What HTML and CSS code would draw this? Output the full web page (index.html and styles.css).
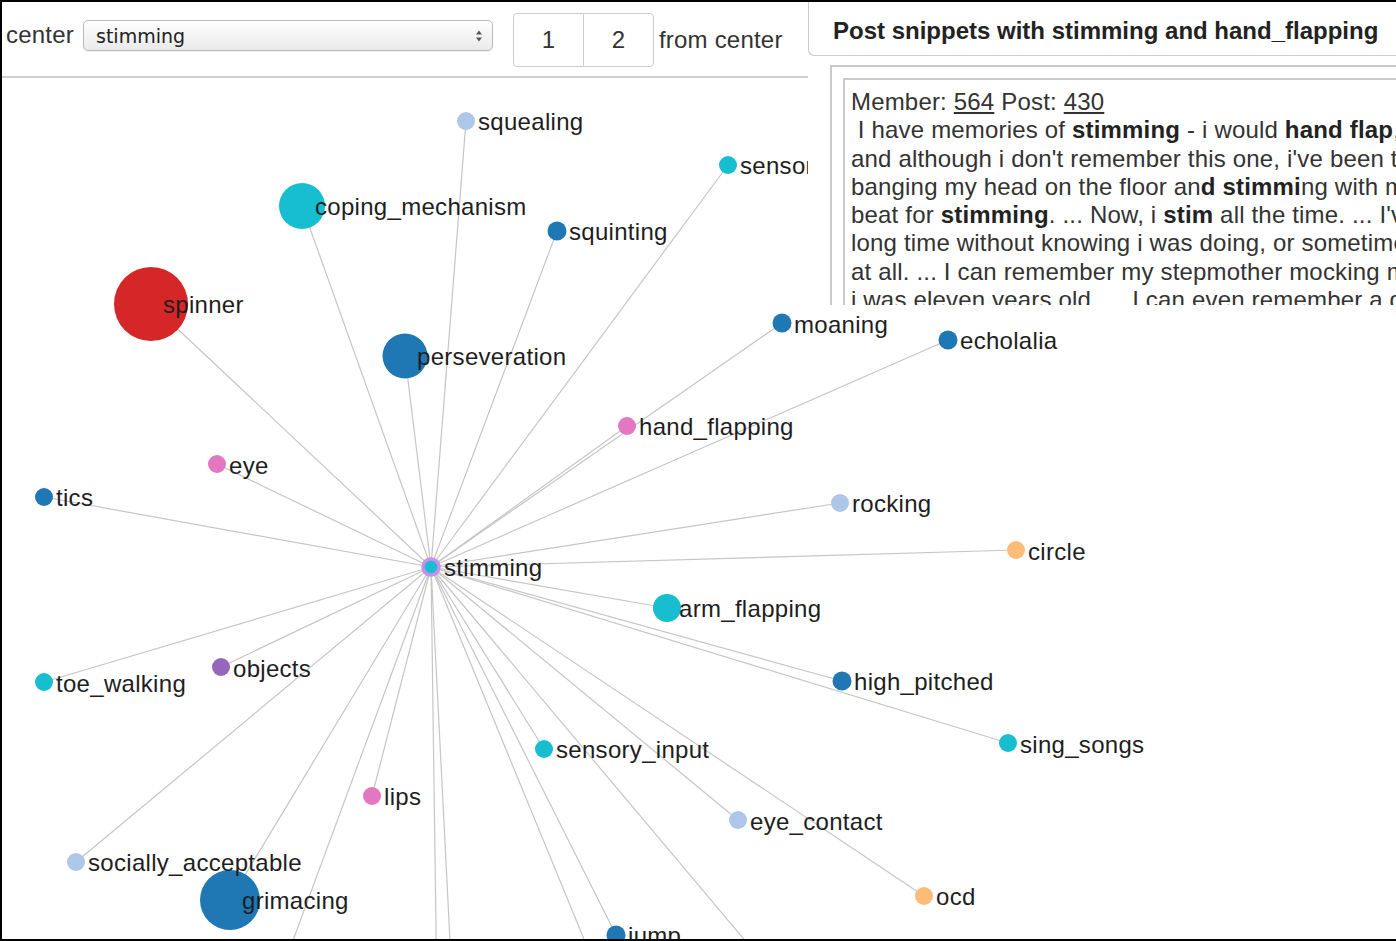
FILE: index.html
```html
<!DOCTYPE html>
<html lang="en">
<head>
<meta charset="utf-8">
<title>Term network: stimming</title>
<link rel="stylesheet" href="styles.css">
</head>
<body>
<div class="frame">
  <div class="toolbar">
    <span class="lbl">center</span>
    <div class="select">
      <span>stimming</span>
      <svg class="select-arrows" width="8" height="14" viewBox="0 0 8 14">
        <path d="M1 5.5 L4 1.5 L7 5.5 Z" fill="#555"/>
        <path d="M1 8.5 L4 12.5 L7 8.5 Z" fill="#555"/>
      </svg>
    </div>
    <div class="btn-group">
      <span class="btn">1</span>
      <span class="btn">2</span>
    </div>
    <span class="suffix">from center</span>
  </div>

  <svg class="graph" width="1394" height="861" viewBox="2 78 1394 861">
    <g class="links">
      <line x1="431" y1="567" x2="466" y2="121"/>
      <line x1="431" y1="567" x2="728" y2="165"/>
      <line x1="431" y1="567" x2="302" y2="206"/>
      <line x1="431" y1="567" x2="557" y2="231"/>
      <line x1="431" y1="567" x2="151" y2="304"/>
      <line x1="431" y1="567" x2="405" y2="356"/>
      <line x1="431" y1="567" x2="782" y2="323"/>
      <line x1="431" y1="567" x2="948" y2="340"/>
      <line x1="431" y1="567" x2="627" y2="426"/>
      <line x1="431" y1="567" x2="217" y2="464"/>
      <line x1="431" y1="567" x2="44" y2="497"/>
      <line x1="431" y1="567" x2="840" y2="503"/>
      <line x1="431" y1="567" x2="1016" y2="550"/>
      <line x1="431" y1="567" x2="667" y2="608"/>
      <line x1="431" y1="567" x2="221" y2="667"/>
      <line x1="431" y1="567" x2="44" y2="682"/>
      <line x1="431" y1="567" x2="842" y2="681"/>
      <line x1="431" y1="567" x2="1008" y2="743"/>
      <line x1="431" y1="567" x2="544" y2="749"/>
      <line x1="431" y1="567" x2="372" y2="796"/>
      <line x1="431" y1="567" x2="738" y2="820"/>
      <line x1="431" y1="567" x2="76" y2="862"/>
      <line x1="431" y1="567" x2="924" y2="896"/>
      <line x1="431" y1="567" x2="230" y2="900"/>
      <line x1="431" y1="567" x2="616" y2="935"/>
      <line x1="431" y1="567" x2="271" y2="1000"/>
      <line x1="431" y1="567" x2="437" y2="1000"/>
      <line x1="431" y1="567" x2="453" y2="1000"/>
      <line x1="431" y1="567" x2="609" y2="1000"/>
      <line x1="431" y1="567" x2="795" y2="1000"/>
    </g>
    <g class="nodes">
      <circle cx="466" cy="121" r="9" fill="#aec7e8"/>
      <circle cx="728" cy="165" r="9" fill="#17becf"/>
      <circle cx="302" cy="206" r="23" fill="#17becf"/>
      <circle cx="557" cy="231" r="9.5" fill="#1f77b4"/>
      <circle cx="151" cy="304" r="37" fill="#d62728"/>
      <circle cx="405" cy="356" r="22.5" fill="#1f77b4"/>
      <circle cx="782" cy="323" r="9.5" fill="#1f77b4"/>
      <circle cx="948" cy="340" r="9.5" fill="#1f77b4"/>
      <circle cx="627" cy="426" r="9" fill="#e377c2"/>
      <circle cx="217" cy="464" r="9" fill="#e377c2"/>
      <circle cx="44" cy="497" r="9" fill="#1f77b4"/>
      <circle cx="840" cy="503" r="9" fill="#aec7e8"/>
      <circle cx="1016" cy="550" r="9" fill="#ffbb78"/>
      <circle cx="667" cy="608" r="14" fill="#17becf"/>
      <circle cx="221" cy="667" r="9" fill="#9467bd"/>
      <circle cx="44" cy="682" r="9" fill="#17becf"/>
      <circle cx="842" cy="681" r="9.5" fill="#1f77b4"/>
      <circle cx="1008" cy="743" r="9" fill="#17becf"/>
      <circle cx="544" cy="749" r="9" fill="#17becf"/>
      <circle cx="372" cy="796" r="9" fill="#e377c2"/>
      <circle cx="738" cy="820" r="9" fill="#aec7e8"/>
      <circle cx="76" cy="862" r="9" fill="#aec7e8"/>
      <circle cx="924" cy="896" r="9" fill="#ffbb78"/>
      <circle cx="230" cy="900" r="30" fill="#1f77b4"/>
      <circle cx="616" cy="935" r="9.5" fill="#1f77b4"/>
      <circle class="center-node" cx="431" cy="567" r="8" fill="#17becf"/>
    </g>
    <g class="labels">
      <text x="478" y="121" dy=".38em">squealing</text>
      <text x="740" y="165" dy=".38em">sensory</text>
      <text x="315" y="206" dy=".38em">coping_mechanism</text>
      <text x="569" y="231" dy=".38em">squinting</text>
      <text x="163" y="304" dy=".38em">spinner</text>
      <text x="417" y="356" dy=".38em">perseveration</text>
      <text x="794" y="324" dy=".38em">moaning</text>
      <text x="960" y="340" dy=".38em">echolalia</text>
      <text x="639" y="426" dy=".38em">hand_flapping</text>
      <text x="229" y="465" dy=".38em">eye</text>
      <text x="56" y="497" dy=".38em">tics</text>
      <text x="852" y="503" dy=".38em">rocking</text>
      <text x="1028" y="551" dy=".38em">circle</text>
      <text x="444" y="567" dy=".38em">stimming</text>
      <text x="679" y="608" dy=".38em">arm_flapping</text>
      <text x="233" y="668" dy=".38em">objects</text>
      <text x="56" y="683" dy=".38em">toe_walking</text>
      <text x="854" y="681" dy=".38em">high_pitched</text>
      <text x="1020" y="744" dy=".38em">sing_songs</text>
      <text x="556" y="749" dy=".38em">sensory_input</text>
      <text x="384" y="796" dy=".38em">lips</text>
      <text x="750" y="821" dy=".38em">eye_contact</text>
      <text x="88" y="862" dy=".38em">socially_acceptable</text>
      <text x="936" y="896" dy=".38em">ocd</text>
      <text x="242" y="900" dy=".38em">grimacing</text>
      <text x="628" y="935" dy=".38em">jump</text>
    </g>
  </svg>

  <aside class="panel">
    <div class="panel-head">Post snippets with stimming and hand_flapping</div>
    <div class="snippets">
      <div class="snippet">
        Member: <a href="#">564</a> Post: <a href="#">430</a><br>
        &nbsp;I have memories of <b>stimming</b> - i would <b>hand flap</b>, rock and hum to myself for hours,<br>
        and although i don't remember this one, i've been told that i spent whole afternoons<br>
        banging my head on the floor an<b>d stimmi</b>ng with my hands to keep a<br>
        beat for <b>stimming</b>. ... Now, i <b>stim</b> all the time. ... I've done it for a<br>
        long time without knowing i was doing, or sometimes without caring<br>
        at all. ... I can remember my stepmother mocking me for it when<br>
        i was eleven years old. ... I can even remember a girl at school copying me.
      </div>
    </div>
  </aside>
</div>
</body>
</html>
```

FILE: styles.css
```css
html, body {
  margin: 0;
  padding: 0;
  background: #fff;
}

.frame {
  position: relative;
  width: 1396px;
  height: 941px;
  box-sizing: border-box;
  border-top: 2px solid #000;
  border-left: 2px solid #000;
  border-bottom: 2px solid #000;
  overflow: hidden;
  background: #fff;
  font-family: "Liberation Sans", Arial, Helvetica, sans-serif;
  color: #333;
}

/* ---------- top controls ---------- */
.toolbar {
  display: flex;
  align-items: flex-start;
  width: 806px;
  height: 76px;
  box-sizing: border-box;
  border-bottom: 2px solid #cfcfcf;
}

.lbl {
  width: 77px;
  margin: 19px 0 0 4px;
  font-size: 24px;
  line-height: 28px;
  letter-spacing: 0.2px;
  color: #333;
}

.select {
  display: flex;
  align-items: center;
  justify-content: space-between;
  width: 410px;
  height: 31px;
  margin-top: 18px;
  padding: 0 9px 0 12px;
  box-sizing: border-box;
  border: 1px solid #b9b9b9;
  border-radius: 5px;
  background: linear-gradient(#ffffff, #eaeaea);
  box-shadow: 0 1px 1px rgba(0, 0, 0, 0.06);
  font-family: "DejaVu Sans", "Liberation Sans", sans-serif;
  font-size: 19px;
  color: #222;
}

.select-arrows {
  display: block;
}

.btn-group {
  display: flex;
  height: 54px;
  margin: 11px 0 0 20px;
  box-sizing: border-box;
  border: 1px solid #cdcdcd;
  border-radius: 4px;
  background: #fff;
}

.btn {
  width: 69px;
  line-height: 52px;
  text-align: center;
  font-size: 24px;
  color: #333;
}

.btn + .btn {
  border-left: 1px solid #cdcdcd;
}

.suffix {
  margin: 24px 0 0 5px;
  font-size: 24px;
  line-height: 28px;
  letter-spacing: 0.2px;
  color: #333;
}

/* ---------- network graph ---------- */
.graph {
  display: block;
}

.links line {
  stroke: #c6c6c6;
  stroke-width: 1.2;
}

.center-node {
  stroke: #c48fee;
  stroke-width: 3.5;
}

.labels text {
  font-family: "Liberation Sans", Arial, Helvetica, sans-serif;
  font-size: 24px;
  letter-spacing: 0.3px;
  fill: #1e1e1e;
}

/* ---------- snippet panel ---------- */
.panel {
  position: absolute;
  top: 0;
  left: 806px;
  right: 0;
  height: 303px;
  overflow: hidden;
  background: #fff;
}

.panel-head {
  height: 54px;
  box-sizing: border-box;
  padding: 4px 0 0 24px;
  border-left: 1px solid #cccccc;
  border-bottom: 1px solid #cccccc;
  border-bottom-left-radius: 6px;
  font-size: 24px;
  font-weight: bold;
  line-height: 49px;
  color: #222;
  white-space: nowrap;
}

.snippets {
  width: 760px;
  margin: 9px 0 0 22px;
  padding: 11px 0 0 11px;
  border: 2px solid #cacaca;
}

.snippet {
  padding: 8px 6px 8px 6px;
  border: 2px solid #cacaca;
  font-size: 24px;
  line-height: 28.3px;
  letter-spacing: 0.18px;
  color: #333;
  white-space: nowrap;
}

.snippet a {
  color: #333;
  text-decoration: underline;
}

.snippet b {
  color: #222;
}
```
